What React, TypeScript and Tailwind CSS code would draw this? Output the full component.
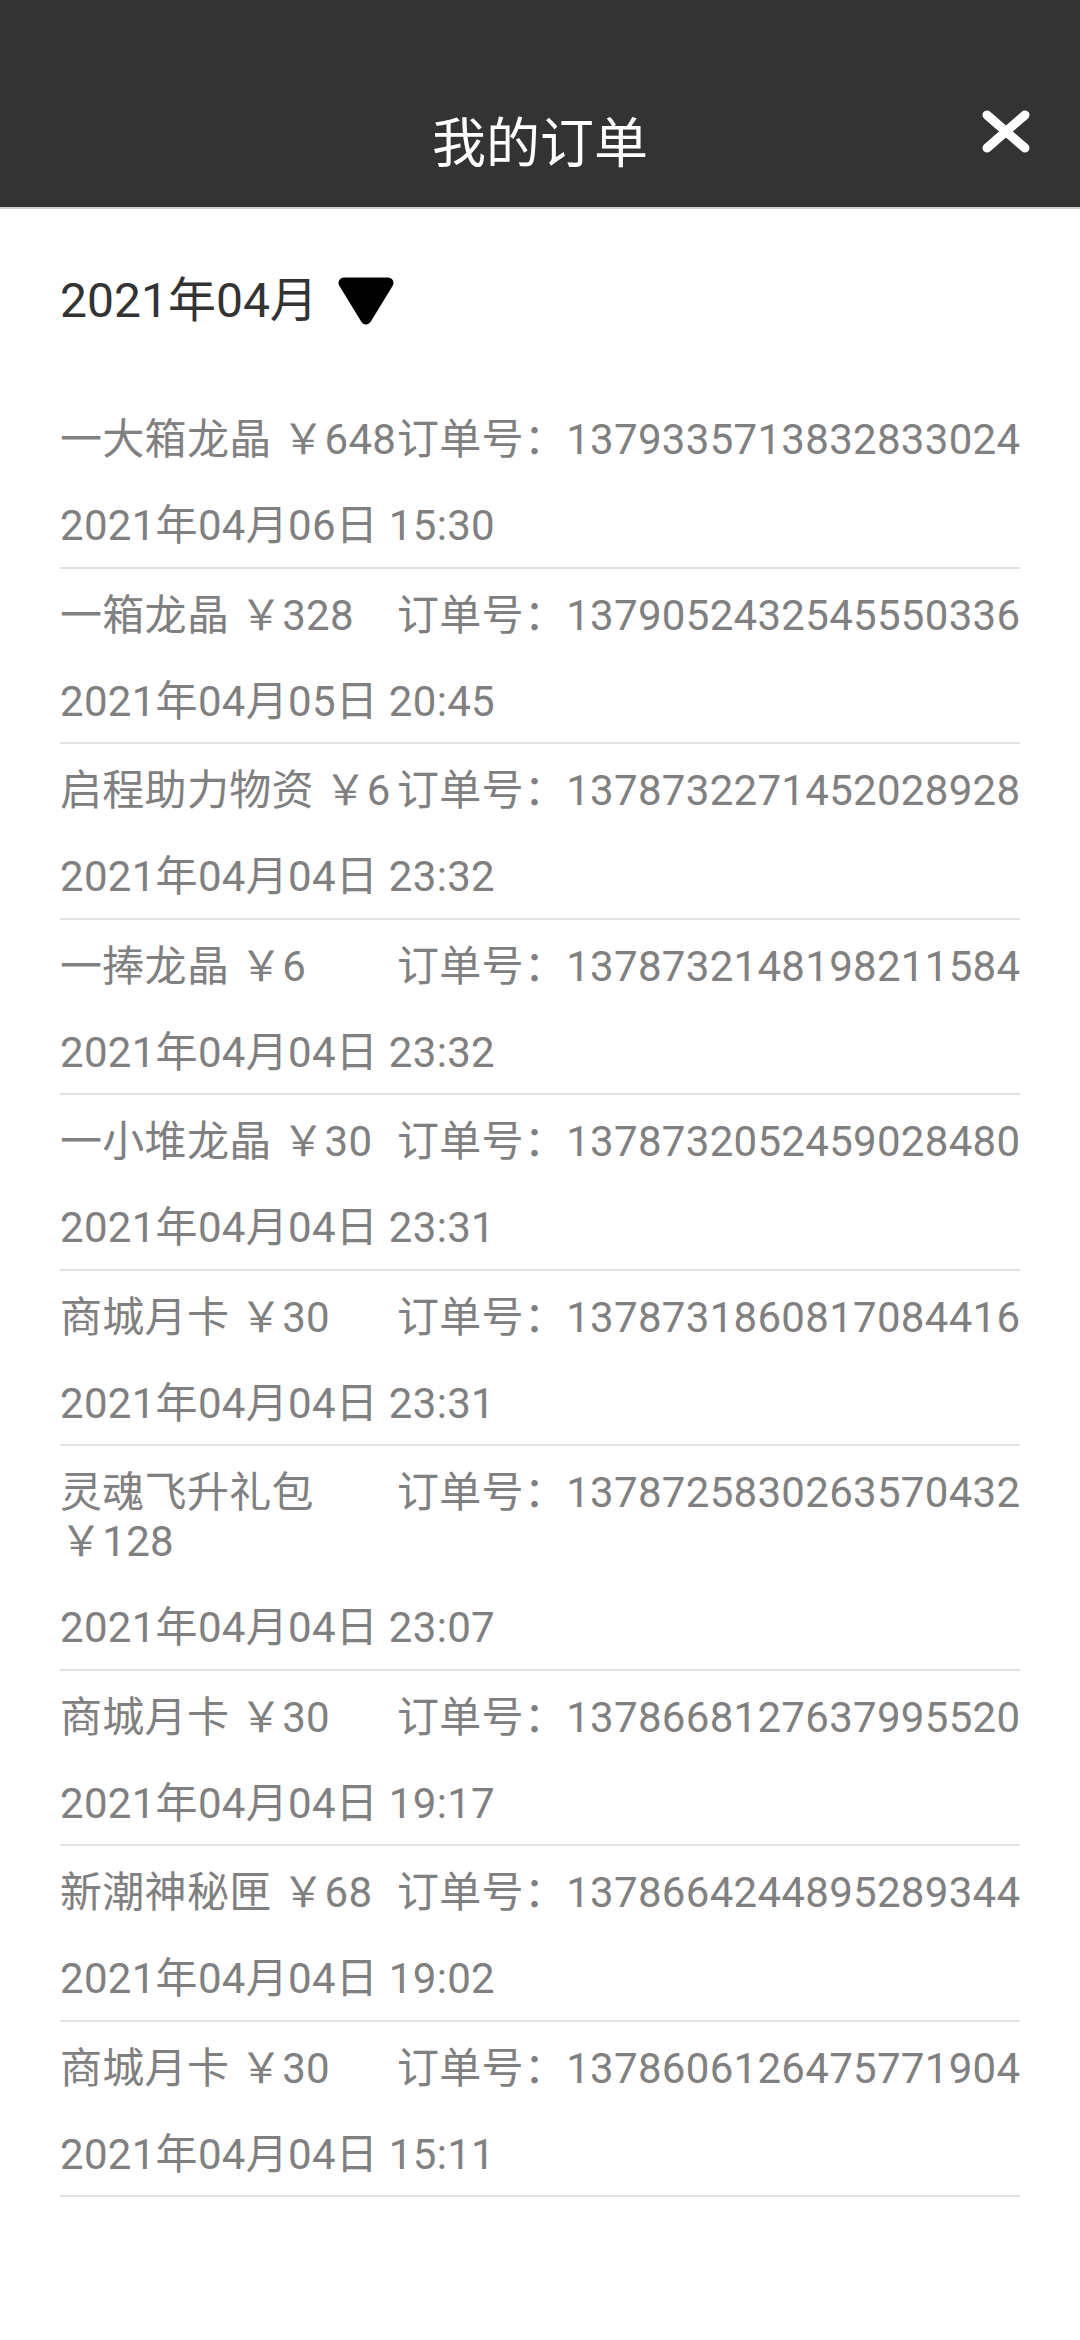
const orders = [
  { name: "一大箱龙晶 ￥648", id: "1379335713832833024", time: "2021年04月06日 15:30" },
  { name: "一箱龙晶 ￥328", id: "1379052432545550336", time: "2021年04月05日 20:45" },
  { name: "启程助力物资 ￥6", id: "1378732271452028928", time: "2021年04月04日 23:32" },
  { name: "一捧龙晶 ￥6", id: "1378732148198211584", time: "2021年04月04日 23:32" },
  { name: "一小堆龙晶 ￥30", id: "1378732052459028480", time: "2021年04月04日 23:31" },
  { name: "商城月卡 ￥30", id: "1378731860817084416", time: "2021年04月04日 23:31" },
  { name: "灵魂飞升礼包 ￥128", id: "1378725830263570432", time: "2021年04月04日 23:07" },
  { name: "商城月卡 ￥30", id: "1378668127637995520", time: "2021年04月04日 19:17" },
  { name: "新潮神秘匣 ￥68", id: "1378664244895289344", time: "2021年04月04日 19:02" },
  { name: "商城月卡 ￥30", id: "1378606126475771904", time: "2021年04月04日 15:11" },
];

export default function App() {
  return (
    <div className="w-[1080px] min-h-[2340px] bg-white font-['Roboto','Noto_Sans_CJK_SC',sans-serif]">
      <header className="h-[209px] bg-[#333333] border-b-2 border-[#cfcfcf] grid grid-cols-[1fr_auto_1fr] items-start">
        <div />
        <h1 className="mt-[113px] text-[54px] leading-[64px] text-white font-normal whitespace-nowrap">
          我的订单
        </h1>
        <button className="justify-self-end mt-[101px] mr-[44px] w-[60px] h-[60px]" aria-label="关闭">
          <svg width="60" height="60" viewBox="0 0 60 60" fill="none">
            <path d="M11 14 L49 47 M49 14 L11 47" stroke="#ffffff" strokeWidth="9" strokeLinecap="round" />
          </svg>
        </button>
      </header>

      <div className="flex items-center h-[60px] mt-[62px] mb-[62px] px-[60px]">
        <span className="text-[48px] leading-[60px] text-[#333333] whitespace-nowrap">2021年04月</span>
        <svg className="ml-[20px]" width="56" height="48" viewBox="0 0 56 48">
          <path d="M6 6 L50 6 L28 42 Z" fill="#000000" stroke="#000000" strokeWidth="11" strokeLinejoin="round" />
        </svg>
      </div>

      <div className="px-[60px] text-[42px] text-[#808080] tracking-[0.3px]">
        {orders.map((o, i) => (
          <div key={i} className="border-b-2 border-[#e2e2e2] pt-[22px] pb-[16.5px]">
            <div className="flex leading-[49px]">
              <div className="w-[337px] shrink-0">{o.name}</div>
              <div className="whitespace-nowrap">订单号：{o.id}</div>
            </div>
            <div className="mt-[37px] leading-[49px] whitespace-nowrap">{o.time}</div>
          </div>
        ))}
      </div>
    </div>
  );
}
